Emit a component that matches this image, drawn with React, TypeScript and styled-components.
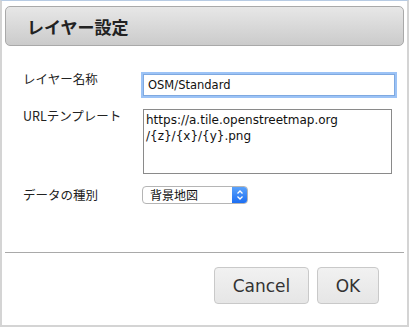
import React from "react";
import styled, { createGlobalStyle } from "styled-components";

const GlobalStyle = createGlobalStyle`
  html, body {
    margin: 0;
    padding: 0;
    background: #ffffff;
  }
`;

export default function App() {
  return (
    <>
      <GlobalStyle />
      <Dialog>
        <Header>
          <Title>レイヤー設定</Title>
        </Header>
        <Form>
          <Label $offset={-3}>レイヤー名称</Label>
          <TextInput defaultValue="OSM/Standard" />
          <Label $offset={0}>URLテンプレート</Label>
          <TextArea
            defaultValue={"https://a.tile.openstreetmap.org\n/{z}/{x}/{y}.png"}
          />
          <Label $offset={1}>データの種別</Label>
          <SelectBox>
            <SelectText>背景地図</SelectText>
            <SelectArrow>
              <svg width="8" height="12" viewBox="0 0 8 12">
                <path
                  d="M1.5 4.5 L4 2 L6.5 4.5 M1.5 7.5 L4 10 L6.5 7.5"
                  fill="none"
                  stroke="#ffffff"
                  strokeWidth="1.3"
                />
              </svg>
            </SelectArrow>
          </SelectBox>
        </Form>
        <Footer>
          <Button>Cancel</Button>
          <Button $wide={false}>OK</Button>
        </Footer>
      </Dialog>
    </>
  );
}

const Dialog = styled.div`
  width: 409px;
  height: 327px;
  box-sizing: border-box;
  border-top: 1px solid #b7cbe3;
  border-left: 2px solid #d4d4d4;
  border-right: 2px solid #d4d4d4;
  border-bottom: 2px solid #d4d4d4;
  display: flex;
  flex-direction: column;
  padding: 5px 3px 0;
  background: #ffffff;
`;

const Header = styled.div`
  height: 40px;
  box-sizing: border-box;
  border: 1px solid #a9a9a9;
  border-radius: 5px;
  background: linear-gradient(#e7e7e7, #cbcbcb);
  display: flex;
  align-items: center;
  padding-left: 21px;
`;

const Title = styled.h1`
  margin: 0;
  font-family: "Noto Sans CJK JP", sans-serif;
  font-size: 17px;
  font-weight: bold;
  color: #222222;
`;

const Form = styled.div`
  display: grid;
  grid-template-columns: 119px 1fr;
  align-items: start;
  align-content: start;
  row-gap: 12px;
  padding: 28px 0 0 18px;
`;

const Label = styled.label<{ $offset: number }>`
  font-family: "Noto Sans CJK JP", sans-serif;
  font-size: 12.5px;
  line-height: 16px;
  color: #222222;
  margin-top: ${(p) => p.$offset}px;
`;

const TextInput = styled.input`
  width: 252px;
  height: 22px;
  box-sizing: border-box;
  margin: 0 0 0 1px;
  border: 1px solid #7fa9e0;
  box-shadow: 0 0 0 2px #9cc3f6;
  outline: none;
  padding: 0 4px;
  font-family: "DejaVu Sans", Verdana, sans-serif;
  font-size: 11.5px;
  color: #111111;
`;

const TextArea = styled.textarea`
  display: block;
  width: 249px;
  height: 65px;
  box-sizing: border-box;
  margin: 1px 0 0 1px;
  border: 1px solid #8a8a8a;
  padding: 2px 2px;
  resize: none;
  font-family: "DejaVu Sans", Verdana, sans-serif;
  font-size: 12px;
  line-height: 16px;
  color: #111111;
`;

const SelectBox = styled.div`
  width: 106px;
  height: 18px;
  box-sizing: border-box;
  border: 1px solid #b5b5b5;
  border-radius: 4px;
  display: flex;
  overflow: hidden;
  background: #ffffff;
`;

const SelectText = styled.span`
  flex: 1;
  padding-left: 7px;
  font-family: "Noto Sans CJK JP", sans-serif;
  font-size: 12px;
  line-height: 16px;
  color: #111111;
`;

const SelectArrow = styled.span`
  width: 15px;
  background: linear-gradient(#5aa2fb, #1c6ef2);
  display: flex;
  align-items: center;
  justify-content: center;
`;

const Footer = styled.div`
  margin-top: auto;
  height: 73px;
  box-sizing: border-box;
  border-top: 1px solid #a9a9a9;
  display: flex;
  align-items: flex-start;
  justify-content: flex-end;
  gap: 8px;
  padding: 14px 25px 0 0;
`;

const Button = styled.button<{ $wide?: boolean }>`
  height: 37px;
  min-width: ${(p) => (p.$wide === false ? "62px" : "95px")};
  box-sizing: border-box;
  border: 1px solid #c9c9c9;
  border-radius: 4px;
  background: linear-gradient(#f1f1f1, #e6e6e6);
  font-family: "DejaVu Sans", Verdana, sans-serif;
  font-size: 17px;
  color: #333333;
  padding: 0 10px;
`;
